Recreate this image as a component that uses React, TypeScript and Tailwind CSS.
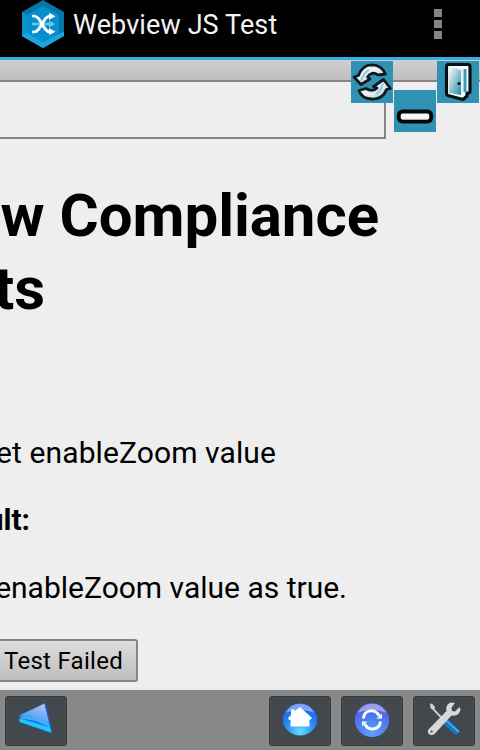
import React from "react";

function AppLogo() {
  return (
    <svg width="42" height="48" viewBox="0 0 42 48" className="block">
      <path d="M21 0 42 12V36L21 48 0 36V12Z" fill="#0875a8" />
      <path d="M0 12 21 24V48L0 36Z" fill="#118fc8" />
      <path d="M0 35 6 32 21 42 36 34 42 32V36L21 48 0 36Z" fill="#1ca6df" />
      <path d="M21 5.500 37 15V33L21 42.500 5 33V15Z" fill="#078fcb" />
      <path d="M10 24h17" stroke="#6cc5ea" strokeWidth="2.600" />
      <path d="M27 20.500 33 24l-6 3.500Z" fill="#6cc5ea" />
      <path d="M10 32h2c7 0 9-16 16-16M10 16h2c7 0 9 16 16 16" fill="none" stroke="#fff" strokeWidth="2.700" />
      <path d="M27 12.800 33.500 16.300 27 20ZM27 28 33.500 31.700 27 35Z" fill="#fff" />
    </svg>
  );
}

function SwapIcon() {
  const top = "M3 16 7.500 14.500C10 7 15 3.800 21 3.800 28 4 32 7 34.500 13L27 14C23 11 19 12 16.500 16L19 18 10 23.500Z";
  const bottom = "M39.500 27.500 35.500 28.500C33 35 28 38.500 21 38 15 38 10 35.500 8 29.500L15 27.500C19 30 23 30 26 27L22.500 25.500 32.500 18.500Z";
  return (
    <svg width="42" height="42" viewBox="0 0 42 42" className="block">
      <defs>
        <linearGradient id="swap" x1="0" y1="0" x2="1" y2="1">
          <stop offset="0" stopColor="#fff" />
          <stop offset=".55" stopColor="#e0edf3" />
          <stop offset="1" stopColor="#94c3d6" />
        </linearGradient>
      </defs>
      <path d={top} fill="url(#swap)" stroke="#101a1e" strokeWidth="2.800" strokeLinejoin="round" />
      <path d={bottom} fill="url(#swap)" stroke="#101a1e" strokeWidth="2.800" strokeLinejoin="round" />
      <path d="M18 9c-4 2-6 5-8 11M25 33c4-2 5-5 7-11" fill="none" stroke="#8ec9df" strokeWidth="2" />
    </svg>
  );
}

function DoorIcon() {
  return (
    <svg width="42" height="42" viewBox="0 0 42 42" className="block">
      <defs>
        <linearGradient id="door" x1="0" y1="0" x2="1" y2="1">
          <stop offset="0" stopColor="#fff" />
          <stop offset="1" stopColor="#2489a9" />
        </linearGradient>
      </defs>
      <path d="M11 3.500H31Q33 3.500 33 6V30Q33 32 31 32H30V35L26 38.500 11 34.500Q9.500 34 9.500 32V6Q9.500 3.500 11 3.500Z" fill="#fff" stroke="#071014" strokeWidth="3.200" strokeLinejoin="round" />
      <path d="M12 6 24 9V34L12 32Z" fill="url(#door)" />
      <path d="M26.500 8H29.500V31H26.500Z" fill="#3f9ab6" />
      <path d="M11.500 5.500 25 8.500V36" fill="none" stroke="#d8edf5" strokeWidth="1.200" />
      <circle cx="22" cy="22.500" r="1.600" fill="#071318" />
    </svg>
  );
}

function MinusIcon() {
  return (
    <svg width="42" height="42" viewBox="0 0 42 42" className="block">
      <rect x="4.700" y="21.500" width="32.600" height="10" rx="4" fill="#f7f7f9" stroke="#030708" strokeWidth="4" />
      <path d="M8 29H34" stroke="#dfe4e9" strokeWidth="1" />
    </svg>
  );
}

function BackIcon() {
  return (
    <svg width="62" height="50" viewBox="0 0 62 50" className="block">
      <defs>
        <linearGradient id="face" x1=".8" y1="0" x2=".3" y2="1">
          <stop offset="0" stopColor="#bbc4f3" />
          <stop offset=".55" stopColor="#60aaf4" />
          <stop offset="1" stopColor="#168ff0" />
        </linearGradient>
      </defs>
      <path d="M14.500 19 40 7.500 47 36 45.500 37 14.500 26Z" fill="#087de4" />
      <path d="M14.500 19.500 39.500 7.500 45 30Z" fill="url(#face)" />
      <path d="M14.500 22.500 45.500 31.500 46.500 36.500 14.500 26Z" fill="#20c5ff" />
      <path d="M16 21.500 32 24 45 30" fill="none" stroke="#48adf8" strokeWidth="2" />
      <path d="M40 8 46.500 35" stroke="#1763e2" strokeWidth="1" />
    </svg>
  );
}

function Orb({ id }: { id: string }) {
  return (
    <>
      <defs>
        <radialGradient id={id} cx=".5" cy=".88" r=".9">
          <stop offset="0" stopColor={id === "home" ? "#65e0ff" : "#629cff"} />
          <stop offset=".45" stopColor={id === "home" ? "#268ef5" : "#4c83ef"} />
          <stop offset="1" stopColor={id === "home" ? "#1856e6" : "#554fd5"} />
        </radialGradient>
      </defs>
      <ellipse cx="31" cy={id === "home" ? 23.5 : 24} rx="17.300" ry={id === "home" ? 16 : 17} fill={`url(#${id})`} />
      <path d="M17 17C21 4.500 41 4.500 45 17 38 13 24 13 17 17Z" fill="#fff" opacity=".42" />
    </>
  );
}

function HomeIcon() {
  return (
    <svg width="62" height="50" viewBox="0 0 62 50" className="block">
      <Orb id="home" />
      <path d="M31 11 43 22 41 24H40.500V30.500H21.500V24H20L19 22 22 19V13.500H26V15Z" fill="#fcfdff" />
    </svg>
  );
}

function RefreshIcon() {
  return (
    <svg width="62" height="50" viewBox="0 0 62 50" className="block">
      <Orb id="reload" />
      <path d="M22.500 22.500C23 13 35 12.500 38 20M39.500 25.500C38.500 34.500 27 35.500 24 28" fill="none" stroke="#f8fbff" strokeWidth="3" />
      <path d="M35.500 22.500H41V17.500ZM26.500 25.500H21V30.500Z" fill="#f8fbff" />
    </svg>
  );
}

function ToolsIcon() {
  return (
    <svg width="62" height="50" viewBox="0 0 62 50" className="block">
      <path d="M17 8 19 7.500 22 11 21.500 13 32 24 30.500 25.500 20 14 17.500 12Z" fill="#cfd1d2" />
      <path d="M32 25 45 37" stroke="#137bcd" strokeWidth="6" />
      <path d="M32 23.500 46 36" stroke="#55b1ef" strokeWidth="1.500" />
      <path d="M39 6.500 42 7 38.500 11.500 39 15 42 15.500 46.500 11 47.500 13C47 18 43 20.500 38.500 19.500L21.500 38C18 41 13 37 15.500 33.500L33.500 15C32.500 10 35 7 39 6.500Z" fill="#d9d9da" />
      <circle cx="18.500" cy="35.500" r="1.300" fill="#646a6d" />
    </svg>
  );
}

function ToolbarButton({ label, className = "", children }: { label: string; className?: string; children: React.ReactNode }) {
  return (
    <button aria-label={label} className={`h-[50px] w-[62px] rounded-[3px] border border-[#35393b] bg-[#42484b] [&>svg]:-ml-px [&>svg]:-mt-px ${className}`}>
      {children}
    </button>
  );
}

function TextLine({ className, children }: { className: string; children: React.ReactNode }) {
  return <div className={`flex justify-end whitespace-nowrap text-black ${className}`}>{children}</div>;
}

export default function App() {
  return (
    <div className="relative flex h-[750px] w-[480px] flex-col overflow-hidden bg-[#eee] font-[Roboto,sans-serif]">
      <header className="flex h-[60px] shrink-0 border-b-[3px] border-[#32b0e5] bg-black pl-[22px]">
        <AppLogo />
        <h1 className="ml-[9px] mt-[7px] h-9 grow whitespace-nowrap text-[27px] leading-9 tracking-[0.1px] text-[#f3f3f3]">Webview JS Test</h1>
        <div className="mr-[38px] mt-[9px] flex flex-col gap-[3px]">
          <i className="size-2 bg-[#858585]" />
          <i className="size-2 bg-[#858585]" />
          <i className="size-2 bg-[#858585]" />
        </div>
      </header>

      <main className="flex h-[630px] shrink-0 flex-col">
        <div className="h-[22px] shrink-0 border-b-2 border-[#858585] bg-linear-to-b from-[#cecece] to-[#bfbfbf]" />
        <div className="h-[57px] w-[386px] shrink-0 border-b-2 border-r-2 border-[#858585]" />
        <h2 className="mt-10 shrink-0 text-[60px] font-bold leading-[73px] tracking-[-0.05px]">
          <TextLine className="w-[379px]">w Compliance</TextLine>
          <TextLine className="w-[45px]">ts</TextLine>
        </h2>
        <TextLine className="mt-[110px] w-[276px] text-[30px] leading-9 tracking-[0.1px]">et enableZoom value</TextLine>
        <TextLine className="mt-[31px] w-[30px] text-[30px] font-bold leading-9">ult:</TextLine>
        <TextLine className="mt-8 w-[347px] text-[30px] leading-9">enableZoom value as true.</TextLine>
        <button className="-ml-1 mt-[33px] flex h-[43px] w-[142px] shrink-0 items-center justify-end whitespace-nowrap rounded-[3px] border-2 border-[#868686] bg-linear-to-b from-[#dedede] to-[#bebebe] pr-[13px] text-[24px] tracking-[0.28px] text-black">
          Test Failed
        </button>
      </main>

      <footer className="flex h-[60px] shrink-0 items-center gap-[10px] bg-[#888] px-[5px] pt-[2px]">
        <ToolbarButton label="Back"><BackIcon /></ToolbarButton>
        <ToolbarButton label="Home" className="ml-auto"><HomeIcon /></ToolbarButton>
        <ToolbarButton label="Refresh"><RefreshIcon /></ToolbarButton>
        <ToolbarButton label="Tools"><ToolsIcon /></ToolbarButton>
      </footer>

      <button aria-label="Reload" className="absolute left-[351px] top-[61px] bg-[#3092b3]"><SwapIcon /></button>
      <button aria-label="Minimize" className="absolute left-[394px] top-[90px] bg-[#3092b3]"><MinusIcon /></button>
      <button aria-label="Exit" className="absolute left-[437px] top-[61px] bg-[#3092b3]"><DoorIcon /></button>
    </div>
  );
}
